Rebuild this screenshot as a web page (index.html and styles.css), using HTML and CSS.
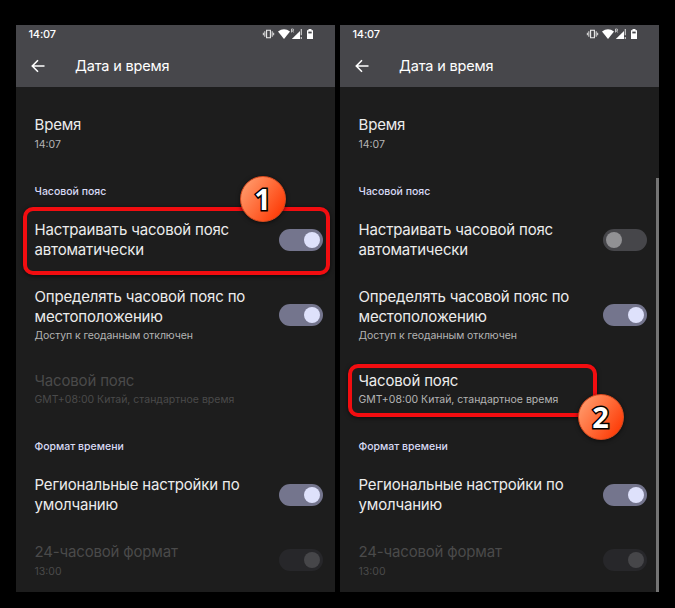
FILE: index.html
```html
<!DOCTYPE html>
<html lang="ru">

<head>
    <meta charset="UTF-8">
    <meta name="viewport" content="width=device-width, initial-scale=1.0">
    <title>Дата и время</title>
    <link rel="stylesheet" href="styles.css">
</head>

<body>
    <svg class="sprite" width="0" height="0">
        <symbol id="status-icons" viewBox="0 0 52 12">
            <path d="M4.600 2.200h3.800v7.600H4.600z" fill="none" stroke="#eee" stroke-width="1.100" />
            <path d="M2.800 3.300v5.400M10.200 3.300v5.400M1.400 4.800v2.400M11.600 4.800v2.400" stroke="#ccc" stroke-width="1.200" />
            <path d="M16 3.600Q22-1 28 3.600L22 11z" fill="#fff" />
            <path d="M29.500 4.500V1h1.200a.9.9 0 010 1.900h-1.200m1.100 0l1 1.600" fill="none" stroke="#ddd" stroke-width=".8" />
            <path d="M38 3v8h-8.200z" fill="#fff" />
            <path d="M39.300 1v6.200M39.300 9v2" stroke="#ccc" stroke-width="1.200" />
            <path d="M46.500 1h3v1.200h1.500V11h-6V2.200h1.500z" fill="#fff" />
            <path d="M46.300 3.600h3.400v1.800h-3.400z" fill="#47474b" />
        </symbol>
        <symbol id="back" viewBox="0 0 14 14">
            <path d="M13.500 7H1.600M7 1.300L1.300 7 7 12.700" fill="none" stroke="#fff" stroke-width="1.600" />
        </symbol>
    </svg>

    <div class="screens">
        <div class="phone">
            <div class="header">
                <div class="status">
                    <span class="clock">14:07</span>
                    <svg class="status-icons"><use href="#status-icons" /></svg>
                </div>
                <div class="toolbar">
                    <svg class="back"><use href="#back" /></svg>
                    <h1>Дата и время</h1>
                </div>
            </div>
            <div class="list">
                <div class="item item-time">
                    <div class="text">
                        <div class="title">Время</div>
                        <div class="sub">14:07</div>
                    </div>
                </div>
                <div class="category">Часовой пояс</div>
                <div class="item item-auto">
                    <div class="text">
                        <div class="title">Настраивать часовой пояс<br>автоматически</div>
                    </div>
                    <div class="switch on"></div>
                    <div class="mark mark-auto"></div>
                    <div class="badge badge-1">1</div>
                </div>
                <div class="item item-location">
                    <div class="text">
                        <div class="title">Определять часовой пояс по<br>местоположению</div>
                        <div class="sub sub-geo">Доступ к геоданным отключен</div>
                    </div>
                    <div class="switch on"></div>
                </div>
                <div class="item item-zone disabled">
                    <div class="text">
                        <div class="title">Часовой пояс</div>
                        <div class="sub">GMT+08:00 Китай, стандартное время</div>
                    </div>
                </div>
                <div class="category">Формат времени</div>
                <div class="item item-region">
                    <div class="text">
                        <div class="title">Региональные настройки по<br>умолчанию</div>
                    </div>
                    <div class="switch on"></div>
                </div>
                <div class="item item-format disabled">
                    <div class="text">
                        <div class="title">24-часовой формат</div>
                        <div class="sub">13:00</div>
                    </div>
                    <div class="switch on"></div>
                </div>
            </div>
        </div>

        <div class="phone">
            <div class="header">
                <div class="status">
                    <span class="clock">14:07</span>
                    <svg class="status-icons"><use href="#status-icons" /></svg>
                </div>
                <div class="toolbar">
                    <svg class="back"><use href="#back" /></svg>
                    <h1>Дата и время</h1>
                </div>
            </div>
            <div class="list">
                <div class="item item-time">
                    <div class="text">
                        <div class="title">Время</div>
                        <div class="sub">14:07</div>
                    </div>
                </div>
                <div class="category">Часовой пояс</div>
                <div class="item item-auto">
                    <div class="text">
                        <div class="title">Настраивать часовой пояс<br>автоматически</div>
                    </div>
                    <div class="switch"></div>
                </div>
                <div class="item item-location">
                    <div class="text">
                        <div class="title">Определять часовой пояс по<br>местоположению</div>
                        <div class="sub sub-geo">Доступ к геоданным отключен</div>
                    </div>
                    <div class="switch on"></div>
                </div>
                <div class="item item-zone">
                    <div class="text">
                        <div class="title">Часовой пояс</div>
                        <div class="sub">GMT+08:00 Китай, стандартное время</div>
                    </div>
                    <div class="mark mark-zone"></div>
                    <div class="badge badge-2">2</div>
                </div>
                <div class="category">Формат времени</div>
                <div class="item item-region">
                    <div class="text">
                        <div class="title">Региональные настройки по<br>умолчанию</div>
                    </div>
                    <div class="switch on"></div>
                </div>
                <div class="item item-format disabled">
                    <div class="text">
                        <div class="title">24-часовой формат</div>
                        <div class="sub">13:00</div>
                    </div>
                    <div class="switch on"></div>
                </div>
            </div>
            <div class="scrollbar"></div>
        </div>
    </div>
</body>

</html>
```
FILE: styles.css
```css
* {
    padding: 0;
    margin: 0;
    box-sizing: border-box;
}

body {
    height: 608px;
    background: #000;
    color: #ececec;
    font-family: Inter, Roboto, sans-serif;
    overflow: hidden;
}

.sprite {
    display: block;
}

.screens {
    display: flex;
    gap: 5px;
    padding: 25px 16px 16px;
}

.phone {
    position: relative;
    width: 319px;
    height: 567px;
    background: #1d1d1d;
}

.header {
    height: 62px;
    background: #47474b;
    color: #fff;
}

.status {
    height: 18px;
    padding: 0 21px 0 12.5px;
    display: flex;
    align-items: center;
    justify-content: space-between;
}

.clock {
    font-size: 11px;
    font-weight: 500;
    line-height: 18px;
    letter-spacing: -.2px;
}

.status-icons {
    width: 52px;
    height: 12px;
}

.toolbar {
    height: 45px;
    padding-left: 15px;
    display: flex;
    align-items: center;
}

.back {
    width: 14px;
    height: 14px;
    margin-right: 30px;
}

.toolbar h1 {
    font-size: 14.5px;
    font-weight: 400;
    line-height: 20px;
    letter-spacing: -.16px;
}

.list {
    padding-top: 14px;
}

.item {
    position: relative;
    display: flex;
    justify-content: space-between;
    align-items: center;
    padding: 0 12px 0 18.5px;
}

.text {
    align-self: flex-start;
    padding-top: 14px;
    white-space: nowrap;
}

.title {
    font-size: 15px;
    line-height: 19.5px;
    letter-spacing: -.17px;
}

.sub {
    font-size: 10.5px;
    line-height: 19px;
    color: #b4b4b4;
}

.sub-geo {
    letter-spacing: -.08px;
}

.category {
    height: 29px;
    padding-left: 18.5px;
    font-size: 10.5px;
    font-weight: 500;
    line-height: 30px;
    color: #d9daf5;
}

.item-time { height: 76px; }
.item-auto { height: 67px; }
.item-location { height: 84px; }
.item-zone { height: 75px; }
.item-zone .text { padding-top: 13.5px; }
.item-region { height: 67px; }
.item-format { height: 64px; }

.disabled .title,
.disabled .sub {
    color: #4a4a4a;
}

.switch {
    width: 44px;
    height: 22px;
    padding: 3px;
    border-radius: 11px;
    background: #46464a;
    display: flex;
}

.switch::before {
    content: "";
    width: 16px;
    height: 16px;
    border-radius: 50%;
    background: #919194;
}

.switch.on {
    justify-content: flex-end;
    background: #74758d;
}

.switch.on::before {
    background: #dee1fb;
}

.disabled .switch.on {
    background: #27272a;
}

.disabled .switch.on::before {
    background: #464649;
}

/* callouts */
.mark {
    position: absolute;
    border: 4px solid #f20d10;
    border-radius: 10px;
    box-shadow: 0 1px 4px rgba(0, 0, 0, .6);
}

.mark-auto {
    left: 7px;
    top: 1px;
    width: 307px;
    height: 68px;
}

.mark-zone {
    left: 8px;
    top: 7px;
    width: 249px;
    height: 53px;
}

.badge {
    position: absolute;
    width: 46px;
    height: 46px;
    border-radius: 50%;
    background: linear-gradient(125deg, #ff9667 12%, #ff6a37 50%, #fd3c08 88%);
    border: 1px solid #d94a1e;
    box-shadow: 0 1px 4px rgba(0, 0, 0, .6);
    color: #fff;
    font: bold 29px/43px "Noto Sans", sans-serif;
    text-align: center;
    -webkit-text-stroke: 3px #000;
    paint-order: stroke fill;
}

.badge-1 {
    left: 223.5px;
    top: -30.5px;
}

.badge-2 {
    left: 237.5px;
    top: 36.5px;
}

.scrollbar {
    position: absolute;
    right: 0;
    top: 153px;
    bottom: 0;
    width: 3px;
    background: #747474;
}
```
